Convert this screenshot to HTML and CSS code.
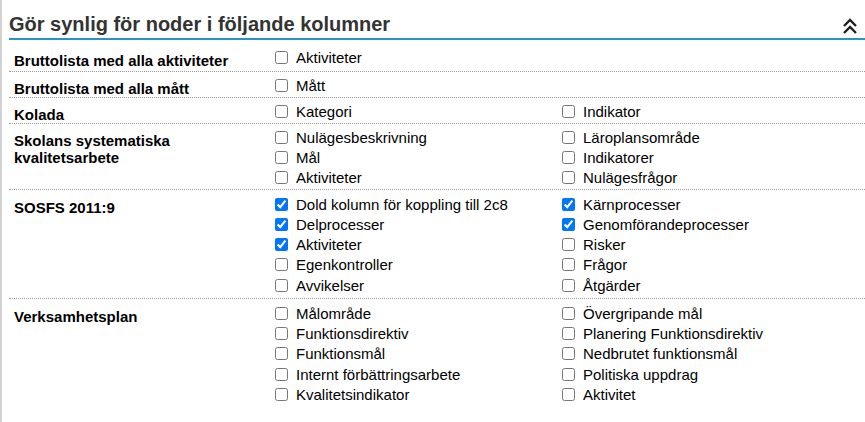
FILE: index.html
```html
<!DOCTYPE html>
<html lang="sv">
<head>
<meta charset="utf-8">
<title>Gör synlig för noder</title>
<link rel="stylesheet" href="styles.css">
</head>
<body>
<div class="panel">
  <div class="header">
    <h2 class="title">Gör synlig för noder i följande kolumner</h2>
    <span class="toggle" aria-label="Fäll ihop">
      <svg width="16" height="17" viewBox="0 0 16 17"><polyline points="2,8 8,2 14,8" fill="none" stroke="#1e1e1e" stroke-width="2.3"/><polyline points="2,15 8,9 14,15" fill="none" stroke="#1e1e1e" stroke-width="2.3"/></svg>
    </span>
  </div>
  <div class="rows">
    <div class="row first">
      <div class="label">Bruttolista med alla aktiviteter</div>
      <div class="col">
        <label class="item"><input type="checkbox"><span>Aktiviteter</span></label>
      </div>
      <div class="col"></div>
    </div>
    <div class="row">
      <div class="label">Bruttolista med alla mått</div>
      <div class="col">
        <label class="item"><input type="checkbox"><span>Mått</span></label>
      </div>
      <div class="col"></div>
    </div>
    <div class="row">
      <div class="label">Kolada</div>
      <div class="col">
        <label class="item"><input type="checkbox"><span>Kategori</span></label>
      </div>
      <div class="col">
        <label class="item"><input type="checkbox"><span>Indikator</span></label>
      </div>
    </div>
    <div class="row">
      <div class="label">Skolans systematiska kvalitetsarbete</div>
      <div class="col">
        <label class="item"><input type="checkbox"><span>Nulägesbeskrivning</span></label>
        <label class="item"><input type="checkbox"><span>Mål</span></label>
        <label class="item"><input type="checkbox"><span>Aktiviteter</span></label>
      </div>
      <div class="col">
        <label class="item"><input type="checkbox"><span>Läroplansområde</span></label>
        <label class="item"><input type="checkbox"><span>Indikatorer</span></label>
        <label class="item"><input type="checkbox"><span>Nulägesfrågor</span></label>
      </div>
    </div>
    <div class="row wide">
      <div class="label">SOSFS 2011:9</div>
      <div class="col">
        <label class="item"><input type="checkbox" checked><span>Dold kolumn för koppling till 2c8</span></label>
        <label class="item"><input type="checkbox" checked><span>Delprocesser</span></label>
        <label class="item"><input type="checkbox" checked><span>Aktiviteter</span></label>
        <label class="item"><input type="checkbox"><span>Egenkontroller</span></label>
        <label class="item"><input type="checkbox"><span>Avvikelser</span></label>
      </div>
      <div class="col">
        <label class="item"><input type="checkbox" checked><span>Kärnprocesser</span></label>
        <label class="item"><input type="checkbox" checked><span>Genomförandeprocesser</span></label>
        <label class="item"><input type="checkbox"><span>Risker</span></label>
        <label class="item"><input type="checkbox"><span>Frågor</span></label>
        <label class="item"><input type="checkbox"><span>Åtgärder</span></label>
      </div>
    </div>
    <div class="row wide last">
      <div class="label">Verksamhetsplan</div>
      <div class="col">
        <label class="item"><input type="checkbox"><span>Målområde</span></label>
        <label class="item"><input type="checkbox"><span>Funktionsdirektiv</span></label>
        <label class="item"><input type="checkbox"><span>Funktionsmål</span></label>
        <label class="item"><input type="checkbox"><span>Internt förbättringsarbete</span></label>
        <label class="item"><input type="checkbox"><span>Kvalitetsindikator</span></label>
      </div>
      <div class="col">
        <label class="item"><input type="checkbox"><span>Övergripande mål</span></label>
        <label class="item"><input type="checkbox"><span>Planering Funktionsdirektiv</span></label>
        <label class="item"><input type="checkbox"><span>Nedbrutet funktionsmål</span></label>
        <label class="item"><input type="checkbox"><span>Politiska uppdrag</span></label>
        <label class="item"><input type="checkbox"><span>Aktivitet</span></label>
      </div>
    </div>
  </div>
</div>
</body>
</html>
```
FILE: styles.css
```css
html, body {
  margin: 0;
  padding: 0;
  background: #fff;
}
body {
  font-family: "Liberation Sans", Arial, sans-serif;
  color: #000;
}
.panel {
  min-height: 100vh;
  box-sizing: border-box;
  border-left: 2px solid #d2d2d2;
  padding-left: 7px;
}
.header {
  display: flex;
  justify-content: space-between;
  align-items: flex-end;
  height: 40px;
  box-sizing: border-box;
  border-bottom: 2px solid #2a93c6;
  padding-bottom: 2px;
}
.title {
  margin: 0;
  font-size: 20px;
  line-height: 24px;
  font-weight: bold;
  color: #333;
}
.toggle {
  display: block;
  width: 16px;
  height: 17px;
  margin-right: 7px;
  margin-bottom: 1px;
}
.toggle svg {
  display: block;
}
.rows {
  margin-top: 4px;
}
.row {
  display: grid;
  grid-template-columns: 262px 287px 1fr;
  padding: 3px 0 2px;
  border-bottom: 1px dotted #9a9a9a;
}
.row.first {
  padding-bottom: 4px;
}
.row.wide {
  padding-top: 4px;
  padding-bottom: 3px;
}
.row.last {
  border-bottom: none;
}
.label {
  padding: 5px 0 0 5px;
  margin-bottom: -5px;
  font-size: 15px;
  line-height: 17px;
  font-weight: bold;
  color: #000;
}
.col {
  display: flex;
  flex-direction: column;
}
.item {
  display: flex;
  align-items: center;
  height: 20px;
  font-size: 15px;
  color: #000;
}
.row.wide .item {
  height: 20.25px;
}
.item input {
  width: 13px;
  height: 13px;
  margin: 0 8px 0 4px;
  flex: none;
}
```
